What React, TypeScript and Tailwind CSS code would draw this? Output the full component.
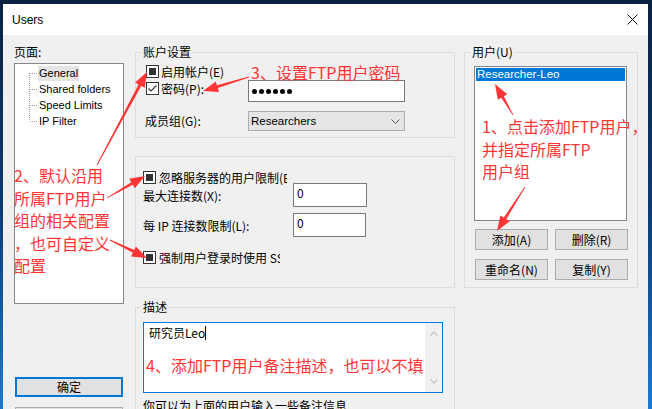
import React from 'react';

const RED = '#ff3535';

function arrowPoints(x1: number, y1: number, x2: number, y2: number) {
  const dx = x2 - x1;
  const dy = y2 - y1;
  const L = Math.hypot(dx, dy);
  const ux = dx / L;
  const uy = dy / L;
  const px = -uy;
  const py = ux;
  const head = 15;
  const hw = 5.5;
  const sw = 1.5;
  const tw = 0.4;
  const bx = x2 - ux * head;
  const by = y2 - uy * head;
  const pts = [
    [x1 + px * tw, y1 + py * tw],
    [bx + px * sw, by + py * sw],
    [bx + px * hw, by + py * hw],
    [x2, y2],
    [bx - px * hw, by - py * hw],
    [bx - px * sw, by - py * sw],
    [x1 - px * tw, y1 - py * tw],
  ];
  return pts.map((p) => p[0].toFixed(1) + ',' + p[1].toFixed(1)).join(' ');
}

const arrows: [number, number, number, number][] = [
  [97, 165, 147, 72],
  [249, 77, 203, 91],
  [107, 198, 145, 176],
  [110, 240, 147, 258],
  [513, 115, 495, 84],
  [525, 187, 497, 231],
];

function Box({ state }: { state: 'ind' | 'checked' }) {
  return (
    <span className="w-[13px] h-[13px] border border-[#333333] bg-white flex items-center justify-center shrink-0">
      {state === 'ind' ? (
        <span className="w-[7px] h-[7px] bg-[#333333]" />
      ) : (
        <svg width="11" height="11" viewBox="0 0 11 11">
          <polyline points="1.5,5.5 4,8 9.5,2.5" fill="none" stroke="#333" strokeWidth="1.1" />
        </svg>
      )}
    </span>
  );
}

function Btn({ children }: { children: React.ReactNode }) {
  return (
    <div className="w-[73px] h-[21px] border border-[#adadad] bg-[#e1e1e1] flex items-center justify-center">
      {children}
    </div>
  );
}

function TreeRow({ label, pos, selected }: { label: string; pos: 'first' | 'mid' | 'last'; selected?: boolean }) {
  const y1 = pos === 'first' ? 8 : 0;
  const y2 = pos === 'last' ? 8 : 16;
  return (
    <div className="h-[16px] flex items-center">
      <svg width="23" height="16" viewBox="0 0 23 16" className="shrink-0">
        <line x1="14.5" y1={y1} x2="14.5" y2={y2} stroke="#a0a0a0" strokeDasharray="1 1" />
        <line x1="15" y1="8.5" x2="23" y2="8.5" stroke="#a0a0a0" strokeDasharray="1 1" />
      </svg>
      <span
        className={
          "px-[1px] leading-[15px] font-['Liberation_Sans',sans-serif] text-[11px] " +
          (selected ? 'bg-[#e5e5e5]' : '')
        }
      >
        {label}
      </span>
    </div>
  );
}

function Chevron({ dir }: { dir: 'up' | 'down' }) {
  return (
    <svg width="8" height="5" viewBox="0 0 8 5">
      <polyline
        points={dir === 'up' ? '0.5,4.5 4,1 7.5,4.5' : '0.5,0.5 4,4 7.5,0.5'}
        fill="none"
        stroke="#c2c2c2"
        strokeWidth="1.2"
      />
    </svg>
  );
}

export default function App() {
  return (
    <div className="relative w-[652px] h-[409px] overflow-hidden bg-linear-to-b from-[#0a2240] via-[#0d3a70] to-[#1a7ad4] font-['Noto_Sans_CJK_SC',sans-serif] text-[12px] leading-[16px] text-black">
      <div className="ml-[3px] mt-[4px] w-[645px] h-[420px] bg-[#f0f0f0] flex flex-col">
        {/* title bar */}
        <div className="h-[31px] bg-white flex items-center justify-between pl-[9px] pr-[10px] shrink-0">
          <span className="text-[12px] font-['Liberation_Sans',sans-serif]">Users</span>
          <svg width="11" height="11" viewBox="0 0 11 11">
            <path d="M0.5 0.5L10.5 10.5M10.5 0.5L0.5 10.5" stroke="#111" strokeWidth="1" />
          </svg>
        </div>

        <div className="flex pl-[11px]">
          {/* left column */}
          <div className="w-[110px] flex flex-col pt-[9px] shrink-0">
            <div className="h-[16px]">页面:</div>
            <div className="mt-[3px] h-[241px] border border-[#828790] bg-white pt-[1px]">
              <TreeRow label="General" pos="first" selected />
              <TreeRow label="Shared folders" pos="mid" />
              <TreeRow label="Speed Limits" pos="mid" />
              <TreeRow label="IP Filter" pos="last" />
            </div>
            <div className="mt-[73px] ml-[1px] w-[108px] h-[20px] border-2 border-[#0078d7] bg-[#e1e1e1] flex items-center justify-center">
              确定
            </div>
            <div className="mt-[10px] ml-[1px] w-[108px] h-[20px] border border-[#adadad] bg-[#e1e1e1]" />
          </div>

          {/* middle column */}
          <div className="ml-[11px] w-[320px] pt-[9px] flex flex-col shrink-0">
            <fieldset className="border border-[#dcdcdc] min-w-0">
              <legend className="ml-[5px] px-[2px] leading-[16px]">账户设置</legend>
              <div className="pl-[10px] pb-[6px] flex flex-col">
                <div className="mt-[4px] h-[15px] flex items-center gap-[2px]">
                  <Box state="ind" />
                  <span>启用帐户(E)</span>
                </div>
                <div className="mt-[1px] h-[22px] flex items-start">
                  <div className="w-[102px] flex items-center gap-[2px] mt-[2px]">
                    <Box state="checked" />
                    <span className="leading-[13px]">密码(P):</span>
                  </div>
                  <div className="w-[157px] h-[22px] border border-[#7a7a7a] bg-white flex items-center pl-[3px] gap-[2px]">
                    <span className="w-[5px] h-[5px] rounded-full bg-black" />
                    <span className="w-[5px] h-[5px] rounded-full bg-black" />
                    <span className="w-[5px] h-[5px] rounded-full bg-black" />
                    <span className="w-[5px] h-[5px] rounded-full bg-black" />
                    <span className="w-[5px] h-[5px] rounded-full bg-black" />
                    <span className="w-[5px] h-[5px] rounded-full bg-black" />
                  </div>
                </div>
                <div className="mt-[9px] h-[20px] flex items-center">
                  <span className="w-[102px] -ml-[1px]">成员组(G):</span>
                  <div className="w-[157px] h-[20px] ml-[1px] bg-[#e5e5e5] border border-[#adadad] flex items-center justify-between pl-[2px] pr-[4px]">
                    <span className="font-['Liberation_Sans',sans-serif] text-[11.5px]">Researchers</span>
                    <svg width="9" height="5" viewBox="0 0 9 5">
                      <polyline points="0.5,0.5 4.5,4.5 8.5,0.5" fill="none" stroke="#555" strokeWidth="1" />
                    </svg>
                  </div>
                </div>
              </div>
            </fieldset>

            <div className="mt-[18px] border border-[#dcdcdc] pl-[7px] pt-[14px] pb-[23px] flex flex-col">
              <div className="h-[13px] flex items-center gap-[3px]">
                <Box state="ind" />
                <span className="w-[128px] overflow-hidden whitespace-nowrap">忽略服务器的用户限制(E)</span>
              </div>
              <div className="-mt-[1px] h-[24px] flex">
                <span className="w-[150px] pt-[5px]">最大连接数(X):</span>
                <div className="w-[74px] h-[24px] border border-[#7a7a7a] bg-white pl-[3px] pt-[1px]">0</div>
              </div>
              <div className="mt-[6px] h-[24px] flex">
                <span className="w-[150px] pt-[5px]">每 IP 连接数限制(L):</span>
                <div className="w-[73px] h-[24px] border border-[#7a7a7a] bg-white pl-[3px] pt-[1px]">0</div>
              </div>
              <div className="mt-[14px] h-[13px] flex items-center gap-[3px]">
                <Box state="ind" />
                <span className="w-[121px] overflow-hidden whitespace-nowrap">强制用户登录时使用 SSL(S)</span>
              </div>
            </div>

            <fieldset className="mt-[11px] border border-[#dcdcdc] min-w-0 h-[140px]">
              <legend className="ml-[5px] px-[2px] leading-[16px]">描述</legend>
              <div className="pl-[7px] flex flex-col">
                <div className="mt-[7px] w-[300px] h-[71px] border border-[#0078d7] bg-white flex">
                  <div className="flex-1 pl-[5px] pt-[2px] flex items-start">
                    <span>研究员Leo</span>
                    <span className="w-[1px] h-[14px] bg-black mt-[1px]" />
                  </div>
                  <div className="w-[17px] bg-[#f0f0f0] flex flex-col items-center justify-between py-[8px]">
                    <Chevron dir="up" />
                    <Chevron dir="down" />
                  </div>
                </div>
                <div className="mt-[5px] whitespace-nowrap">你可以为上面的用户输入一些备注信息</div>
              </div>
            </fieldset>
          </div>

          {/* right column */}
          <div className="ml-[9px] w-[174px] pt-[9px] flex flex-col shrink-0">
            <fieldset className="border border-[#dcdcdc] min-w-0">
              <legend className="ml-[5px] px-[2px] leading-[16px]">用户(U)</legend>
              <div className="pl-[9px] pb-[7px] flex flex-col">
                <div className="mt-[6px] w-[153px] h-[155px] border border-[#828790] bg-white p-[1px]">
                  <div className="h-[13px] bg-[#0078d7] text-white leading-[13px] pl-[1px] font-['Liberation_Sans',sans-serif] text-[11.5px]">
                    Researcher-Leo
                  </div>
                </div>
                <div className="mt-[8px] pl-[1px] flex gap-[7px]">
                  <Btn>添加(A)</Btn>
                  <Btn>删除(R)</Btn>
                </div>
                <div className="mt-[9px] pl-[1px] flex gap-[7px]">
                  <Btn>重命名(N)</Btn>
                  <Btn>复制(Y)</Btn>
                </div>
              </div>
            </fieldset>
          </div>
        </div>
      </div>

      {/* annotations */}
      <div className="absolute left-[251px] top-[61px] text-[16px] leading-[22px] text-[#ff3535] whitespace-nowrap">
        3、设置FTP用户密码
      </div>
      <div className="absolute left-[482px] top-[115px] text-[16px] leading-[22.5px] text-[#ff3535] whitespace-nowrap">
        <div>1、点击添加FTP用户，</div>
        <div>并指定所属FTP</div>
        <div>用户组</div>
      </div>
      <div className="absolute left-[14px] top-[164px] text-[16px] leading-[22.5px] text-[#ff3535] whitespace-nowrap">
        <div>2、默认沿用</div>
        <div>所属FTP用户</div>
        <div>组的相关配置</div>
        <div>，也可自定义</div>
        <div>配置</div>
      </div>
      <div className="absolute left-[146px] top-[354px] text-[16px] leading-[22px] text-[#ff3535] whitespace-nowrap">
        4、添加FTP用户备注描述，也可以不填
      </div>
      <svg className="absolute left-0 top-0 pointer-events-none" width="652" height="409" viewBox="0 0 652 409">
        {arrows.map((a, i) => (
          <polygon key={i} points={arrowPoints(a[0], a[1], a[2], a[3])} fill={RED} />
        ))}
      </svg>
    </div>
  );
}
